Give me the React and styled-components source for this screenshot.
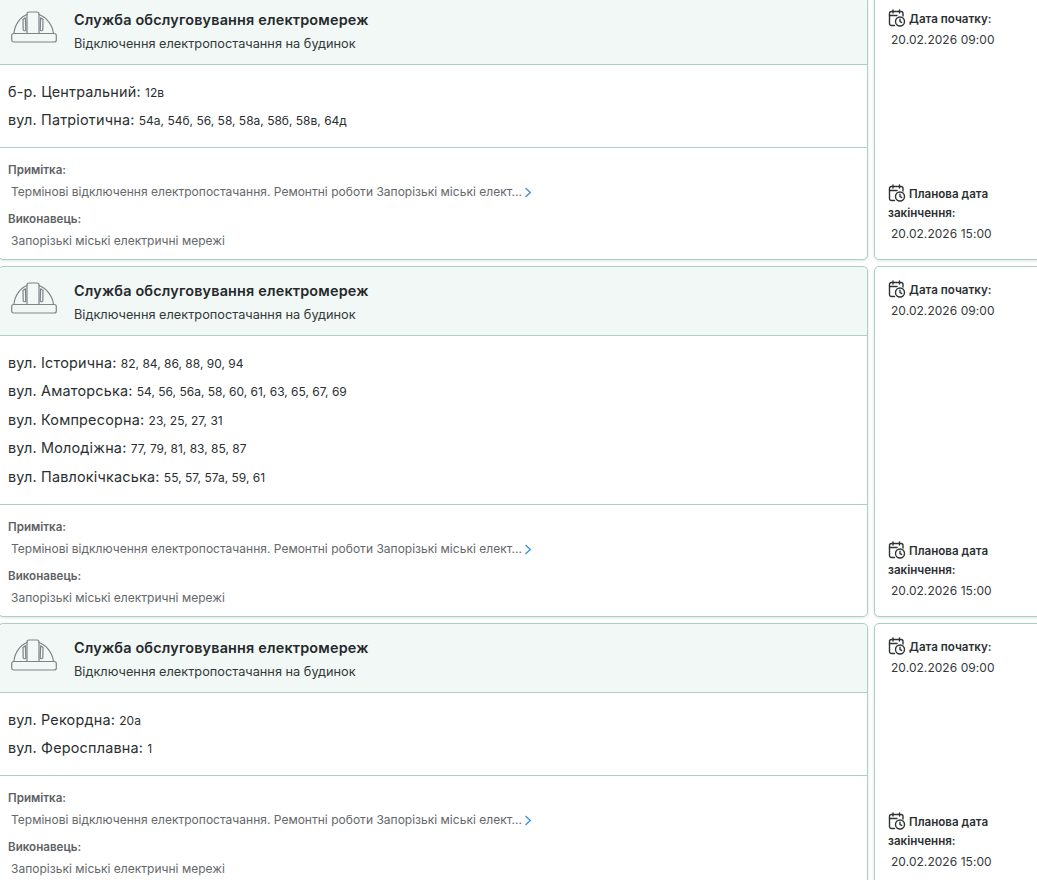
import React from 'react';
import styled, { createGlobalStyle } from 'styled-components';

const GlobalStyle = createGlobalStyle`
    html, body {
        margin: 0;
        padding: 0;
        height: 880px;
        overflow: hidden;
        background: #fff;
        font-family: Inter, "Noto Sans", "Liberation Sans", sans-serif;
    }
`;

const List = styled.div`
    display: flex;
    flex-direction: column;
    gap: 6px;
    margin-top: -5px;
    margin-left: -2px;
    width: 1061px;
`;

const Row = styled.div`
    display: flex;
    gap: 6px;
`;

const Main = styled.div`
    flex: none;
    width: 870px;
    box-sizing: border-box;
    border: 1px solid #aed0c3;
    border-radius: 5px;
    background: #fff;
    box-shadow: 0 1px 3px rgba(150, 190, 175, 0.35);
`;

const Header = styled.div`
    display: flex;
    align-items: flex-start;
    height: 69px;
    box-sizing: border-box;
    padding: 15px 0 0 12px;
    background: #f2f8f5;
    border-bottom: 1px solid #aed0c3;
    border-radius: 5px 5px 0 0;
`;

const HelmetBox = styled.div`
    width: 46px;
    height: 32px;
    margin-right: 17px;
    flex: none;
    svg { display: block; }
`;

const Title = styled.div`
    font-size: 14.4px;
    line-height: 17px;
    font-weight: 600;
    color: #25292c;
    letter-spacing: 0.18px;
`;

const Subtitle = styled.div`
    margin-top: 8px;
    font-size: 12.75px;
    line-height: 15px;
    color: #33383b;
`;

const Addresses = styled.div`
    padding: 12.5px 0 12.5px 9px;
    border-bottom: 1px solid #aed0c3;
`;

const Address = styled.div`
    height: 28.6px;
    line-height: 28.6px;
    font-size: 14.4px;
    color: #2b2f32;
    white-space: nowrap;
    letter-spacing: 0.2px;
`;

const Houses = styled.span`
    font-size: 12px;
    letter-spacing: 0;
`;

const Details = styled.div`
    padding: 15px 0 11.4px 9px;
`;

const Label = styled.div`
    font-size: 11.6px;
    line-height: 15px;
    font-weight: 600;
    color: #5d6265;
    margin-top: ${(props) => (props.$next ? '13.4px' : '0')};
`;

const Value = styled.div`
    display: flex;
    align-items: center;
    margin: 5.6px 0 0 3px;
    height: 15px;
    font-size: 12px;
    line-height: 15px;
    color: #63686b;
    letter-spacing: 0.015px;
    white-space: nowrap;
`;

const More = styled.span`
    display: inline-flex;
    margin: 2px 0 0 2px;
    color: #3d94d6;
`;

const Side = styled.div`
    flex: none;
    width: 185px;
    box-sizing: border-box;
    display: flex;
    flex-direction: column;
    justify-content: space-between;
    padding: 13px 0 18px 13px;
    border: 1px solid #aed0c3;
    border-radius: 5px;
    background: #fff;
    box-shadow: 0 1px 3px rgba(150, 190, 175, 0.35);
`;

const DateTitle = styled.div`
    font-size: 11.6px;
    line-height: 19px;
    font-weight: 600;
    color: #2b2f32;
    width: 125px;
    svg {
        display: inline-block;
        vertical-align: -4px;
        margin-right: 3px;
    }
`;

const DateValue = styled.div`
    margin: 3px 0 0 3px;
    font-size: 12px;
    line-height: 15px;
    color: #33383b;
    letter-spacing: 0.05px;
`;

const HelmetIcon = () => (
    <svg width="46" height="32" viewBox="0 0 46 32" fill="none" stroke="#7d8386" strokeWidth="1.2" strokeLinejoin="round" strokeLinecap="round">
        <path d="M3 22.5C3.5 13.5 9.5 6 16 3.5M28 3.5C35 6 41.5 13.5 42.5 22.5" />
        <path d="M16 22.5V3C16 1.8 17 1 18.2 1H25.8C27 1 28 1.8 28 3V22.5" />
        <path d="M12 8.5L14.4 6.8L14.8 19C13.9 20 13 20 12.2 19Z" />
        <path d="M32 8.5L29.6 6.8L29.2 19C30.1 20 31 20 31.8 19Z" />
        <rect x="0.7" y="22.5" width="44.6" height="8.5" rx="2" />
    </svg>
);

const CalendarClockIcon = () => (
    <svg width="18" height="18" viewBox="0 0 18 18" fill="none" stroke="#2f3336" strokeWidth="1.4" strokeLinecap="round" strokeLinejoin="round">
        <path d="M6.5 16.5H3.5C2.4 16.5 1.5 15.6 1.5 14.5V4.5C1.5 3.4 2.4 2.5 3.5 2.5H13C14.1 2.5 15 3.4 15 4.5V7" />
        <path d="M5 1V4M11.5 1V4M1.5 6.5H9" />
        <circle cx="12" cy="12.5" r="4.5" />
        <path d="M12 10.2V12.6L13.6 13.4" />
    </svg>
);

const ChevronIcon = () => (
    <svg width="8" height="11" viewBox="0 0 8 11" fill="none" stroke="currentColor" strokeWidth="1.4">
        <path d="M1.5 1L6.3 5.5L1.5 10" />
    </svg>
);

const notices = [
    {
        streets: [
            ['б-р. Центральний:', '12в'],
            ['вул. Патріотична:', '54а, 54б, 56, 58, 58а, 58б, 58в, 64д'],
        ],
    },
    {
        streets: [
            ['вул. Історична:', '82, 84, 86, 88, 90, 94'],
            ['вул. Аматорська:', '54, 56, 56а, 58, 60, 61, 63, 65, 67, 69'],
            ['вул. Компресорна:', '23, 25, 27, 31'],
            ['вул. Молодіжна:', '77, 79, 81, 83, 85, 87'],
            ['вул. Павлокічкаська:', '55, 57, 57а, 59, 61'],
        ],
    },
    {
        streets: [
            ['вул. Рекордна:', '20а'],
            ['вул. Феросплавна:', '1'],
        ],
    },
];

const App = () => (
    <>
        <GlobalStyle />
        <List>
            {notices.map((notice, index) => (
                <Row key={index}>
                    <Main>
                        <Header>
                            <HelmetBox><HelmetIcon /></HelmetBox>
                            <div>
                                <Title>Служба обслуговування електромереж</Title>
                                <Subtitle>Відключення електропостачання на будинок</Subtitle>
                            </div>
                        </Header>
                        <Addresses>
                            {notice.streets.map(([street, houses]) => (
                                <Address key={street}>
                                    {street} <Houses>{houses}</Houses>
                                </Address>
                            ))}
                        </Addresses>
                        <Details>
                            <Label>Примітка:</Label>
                            <Value>
                                Термінові відключення електропостачання. Ремонтні роботи Запорізькі міські елект...
                                <More><ChevronIcon /></More>
                            </Value>
                            <Label $next>Виконавець:</Label>
                            <Value>Запорізькі міські електричні мережі</Value>
                        </Details>
                    </Main>
                    <Side>
                        <div>
                            <DateTitle><CalendarClockIcon />Дата початку:</DateTitle>
                            <DateValue>20.02.2026 09:00</DateValue>
                        </div>
                        <div>
                            <DateTitle><CalendarClockIcon />Планова дата закінчення:</DateTitle>
                            <DateValue>20.02.2026 15:00</DateValue>
                        </div>
                    </Side>
                </Row>
            ))}
        </List>
    </>
);

export default App;
